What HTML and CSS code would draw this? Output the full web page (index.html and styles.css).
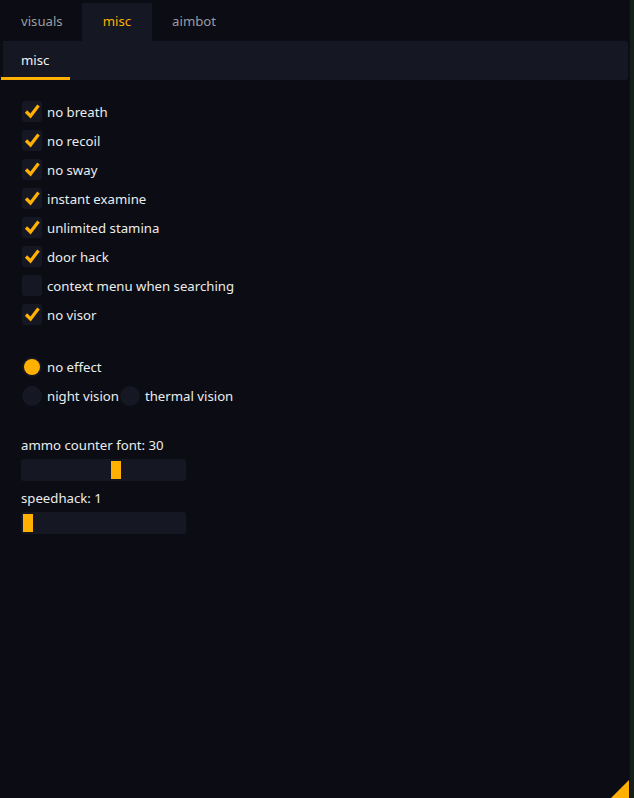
FILE: index.html
```html
<!DOCTYPE html>
<html lang="en">
<head>
    <meta charset="UTF-8">
    <title>misc</title>
    <link rel="stylesheet" href="styles.css">
</head>
<body>
    <div class="window">
        <div class="tabs">
            <div class="tab">visuals</div>
            <div class="tab active">misc</div>
            <div class="tab">aimbot</div>
        </div>
        <div class="subtabs">
            <div class="subtab">misc</div>
        </div>

        <div class="content">
            <div class="checks">
                <label class="row"><span class="box on"><svg viewBox="0 0 20 21"><polyline points="4,10.5 8.5,15 16.5,4.5"/></svg></span>no breath</label>
                <label class="row"><span class="box on"><svg viewBox="0 0 20 21"><polyline points="4,10.5 8.5,15 16.5,4.5"/></svg></span>no recoil</label>
                <label class="row"><span class="box on"><svg viewBox="0 0 20 21"><polyline points="4,10.5 8.5,15 16.5,4.5"/></svg></span>no sway</label>
                <label class="row"><span class="box on"><svg viewBox="0 0 20 21"><polyline points="4,10.5 8.5,15 16.5,4.5"/></svg></span>instant examine</label>
                <label class="row"><span class="box on"><svg viewBox="0 0 20 21"><polyline points="4,10.5 8.5,15 16.5,4.5"/></svg></span>unlimited stamina</label>
                <label class="row"><span class="box on"><svg viewBox="0 0 20 21"><polyline points="4,10.5 8.5,15 16.5,4.5"/></svg></span>door hack</label>
                <label class="row"><span class="box"></span>context menu when searching</label>
                <label class="row"><span class="box on"><svg viewBox="0 0 20 21"><polyline points="4,10.5 8.5,15 16.5,4.5"/></svg></span>no visor</label>
            </div>

            <div class="radios">
                <div class="row"><span class="radio on"></span>no effect</div>
                <div class="row">
                    <span class="radio"></span>night vision
                    <span class="radio second"></span>thermal vision
                </div>
            </div>

            <div class="sliders">
                <div class="slider-label">ammo counter font: 30</div>
                <div class="slider"><span class="grab" style="margin-left: 90px"></span></div>
                <div class="slider-label">speedhack: 1</div>
                <div class="slider"><span class="grab" style="margin-left: 2px"></span></div>
            </div>
        </div>

        <div class="grip"></div>
    </div>
    <div class="edge"></div>
</body>
</html>
```

FILE: styles.css
```css
body {
    margin: 0;
    height: 798px;
    display: flex;
    background: #0b0c14;
    font-family: "Noto Sans", "Open Sans", sans-serif;
    font-size: 13.2px;
    color: #ececec;
    overflow: hidden;
}

.window {
    position: relative;
    width: 630px;
    height: 798px;
    background: #0b0c14;
}

.edge {
    width: 4px;
    background: #16201a;
    border-left: 1px solid #0d120f;
}

.tabs {
    display: flex;
    padding: 3px 0 0 3px;
    height: 38px;
}

.tab {
    padding: 0 19px 0 20px;
    line-height: 36px;
    color: #9c9ca0;
}

.tab:first-child {
    padding-left: 18px;
}

.tab.active {
    background: #151723;
    color: #ffb000;
    padding: 0 21px;
}

.subtabs {
    margin: 0 1px 0 3px;
    height: 39px;
    background: #151723;
    border-radius: 0 3px 3px 0;
    display: flex;
    align-items: stretch;
}

.subtab {
    padding: 0 18px;
    line-height: 38px;
    color: #f4f4f4;
    width: 31px;
    position: relative;
}

.subtab::after {
    content: "";
    position: absolute;
    left: -2px;
    right: 0;
    bottom: 0;
    height: 3px;
    background: #ffb000;
}

.content {
    padding: 21px 0 0 22px;
}

.checks {
    display: flex;
    flex-direction: column;
    gap: 8px;
}

.row {
    display: flex;
    align-items: center;
    height: 21px;
    gap: 5px;
}

.box {
    width: 20px;
    height: 21px;
    background: #151723;
    border-radius: 3px;
    display: block;
}

.box svg {
    width: 20px;
    height: 21px;
    display: block;
}

.box polyline {
    fill: none;
    stroke: #ffb000;
    stroke-width: 3.2;
}

.radios {
    margin-top: 31px;
    display: flex;
    flex-direction: column;
    gap: 8px;
}

.radio {
    width: 20px;
    height: 20px;
    border-radius: 50%;
    background: #151723;
    position: relative;
}

.radio.on::after {
    content: "";
    position: absolute;
    left: 2px;
    top: 2px;
    width: 16px;
    height: 16px;
    border-radius: 50%;
    background: #ffb000;
}

.radio.second {
    margin-left: -4px;
}

.sliders {
    margin-top: 29px;
    display: flex;
    flex-direction: column;
}

.slider-label {
    margin-left: -1px;
    line-height: 20px;
    height: 19px;
}

.slider {
    margin: 5px 0 7px -1px;
    width: 165px;
    height: 22px;
    background: #151723;
    border-radius: 3px;
    display: flex;
    align-items: center;
}

.grab {
    width: 10px;
    height: 18px;
    background: #ffb000;
}

.grip {
    position: absolute;
    right: 0;
    bottom: 0;
    width: 0;
    height: 0;
    border-left: 18px solid transparent;
    border-bottom: 18px solid #ffb000;
}
```
